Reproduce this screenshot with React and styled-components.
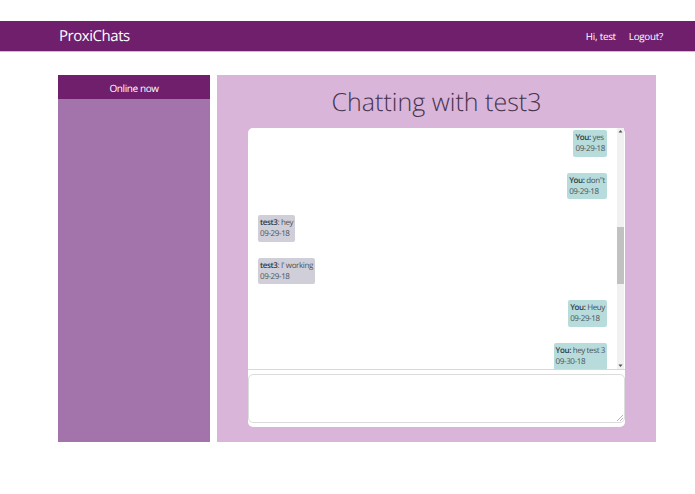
import React from 'react';
import styled, { createGlobalStyle } from 'styled-components';

const GlobalStyle = createGlobalStyle`
  html, body {
    margin: 0;
    padding: 0;
    background: #fff;
    font-family: "Open Sans", "Noto Sans", sans-serif;
    text-rendering: geometricPrecision;
  }
  * {
    box-sizing: border-box;
  }
`;

const Page = styled.div`
  width: 695px;
  height: 494px;
  padding-top: 21px;
  overflow: hidden;
`;

const Navbar = styled.nav`
  height: 31px;
  padding: 0 32px 1px 59px;
  display: flex;
  align-items: center;
  justify-content: space-between;
  background: #701f6d;
  border-bottom: 1px solid #d9b5da;
  color: #fff;
`;

const Brand = styled.div`
  font-size: 15px;
  letter-spacing: -0.45px;
`;

const NavLinks = styled.div`
  display: flex;
  gap: 13px;
  padding-top: 1px;
  font-size: 9.8px;
  letter-spacing: -0.25px;
  color: #fff;
`;

const Content = styled.div`
  margin: 23px 0 0 58px;
  width: 598px;
  height: 367px;
  display: flex;
  gap: 7px;
`;

const Sidebar = styled.aside`
  width: 152px;
  background: #a274ab;
`;

const SidebarHeader = styled.div`
  height: 24px;
  padding-top: 1px;
  display: flex;
  align-items: center;
  justify-content: center;
  background: #701f6d;
  color: #fff;
  font-size: 10px;
  letter-spacing: -0.4px;
`;

const Main = styled.main`
  flex: 1;
  padding: 0 31px;
  background: #d9b5da;
`;

const Title = styled.h1`
  margin: 0;
  height: 53px;
  padding-top: 9px;
  text-align: center;
  font-size: 25px;
  font-weight: 300;
  line-height: 36px;
  color: #47334a;
`;

const ChatBox = styled.div`
  width: 377px;
  height: 299px;
  display: flex;
  flex-direction: column;
  background: #fff;
  border-radius: 5px;
`;

const ScrollArea = styled.div`
  position: relative;
  height: 242px;
  flex-shrink: 0;
  overflow: hidden;
  border-bottom: 1px solid #d8d8d8;
`;

const MessageList = styled.div`
  height: 241px;
  padding: 2px 18px 0 10px;
  display: flex;
  flex-direction: column;
  gap: 16px;
`;

const Bubble = styled.div`
  align-self: ${p => (p.mine ? 'flex-end' : 'flex-start')};
  height: 26.6px;
  flex-shrink: 0;
  padding: 2px 2px 0 2px;
  border-radius: 2px;
  background: ${p => (p.mine ? '#b8dcdc' : '#d0cfd9')};
  color: #4b5358;
  font-size: 8px;
  letter-spacing: -0.38px;
  line-height: 11px;
  white-space: nowrap;

  b {
    font-weight: 600;
    color: #2e3a3f;
  }
`;

const Scrollbar = styled.div`
  position: absolute;
  top: 0;
  right: 1px;
  bottom: 0;
  width: 7px;
  display: flex;
  flex-direction: column;
  justify-content: space-between;
  background: #f1f1f1;
`;

const ScrollThumb = styled.div`
  position: absolute;
  top: 99px;
  left: 0;
  width: 7px;
  height: 57px;
  background: #c1c1c1;
`;

const ScrollArrow = styled.svg`
  display: block;
  width: 7px;
  height: 7px;
  fill: #505050;
`;

const Composer = styled.textarea`
  display: block;
  width: 377px;
  height: 49px;
  margin-top: 4px;
  padding: 2px;
  background: #fff;
  border: 1px solid #dcdcdc;
  border-radius: 5px;
  outline: none;
  font-family: inherit;
  font-size: 9px;

  &::-webkit-resizer {
    background: linear-gradient(135deg, transparent 50%, #b5b5b5 50%, #b5b5b5 60%, transparent 60%, transparent 72%, #b5b5b5 72%, #b5b5b5 82%, transparent 82%) right 1px bottom 1px / 7px 7px no-repeat;
  }
`;

const messages = [
  { id: 1, mine: true, from: 'You:', text: ' yes', date: '09-29-18' },
  { id: 2, mine: true, from: 'You:', text: ' don"t', date: '09-29-18' },
  { id: 3, mine: false, from: 'test3', text: ': hey', date: '09-29-18' },
  { id: 4, mine: false, from: 'test3', text: ": I' working", date: '09-29-18' },
  { id: 5, mine: true, from: 'You:', text: ' Heuy', date: '09-29-18' },
  { id: 6, mine: true, from: 'You:', text: ' hey test 3', date: '09-30-18' },
];

export default function App() {
  return (
    <Page>
      <GlobalStyle />
      <Navbar>
        <Brand>ProxiChats</Brand>
        <NavLinks>
          <span>Hi, test</span>
          <span>Logout?</span>
        </NavLinks>
      </Navbar>
      <Content>
        <Sidebar>
          <SidebarHeader>Online now</SidebarHeader>
        </Sidebar>
        <Main>
          <Title>Chatting with test3</Title>
          <ChatBox>
            <ScrollArea>
              <MessageList>
                {messages.map(m => (
                  <Bubble key={m.id} mine={m.mine}>
                    <b>{m.from}</b>{m.text}
                    <br />
                    {m.date}
                  </Bubble>
                ))}
              </MessageList>
              <Scrollbar>
                <ScrollArrow viewBox="0 0 7 7"><path d="M3.5 2 L5.5 4.6 L1.5 4.6 Z" /></ScrollArrow>
                <ScrollThumb />
                <ScrollArrow viewBox="0 0 7 7"><path d="M3.5 5 L5.5 2.4 L1.5 2.4 Z" /></ScrollArrow>
              </Scrollbar>
            </ScrollArea>
            <Composer />
          </ChatBox>
        </Main>
      </Content>
    </Page>
  );
}
